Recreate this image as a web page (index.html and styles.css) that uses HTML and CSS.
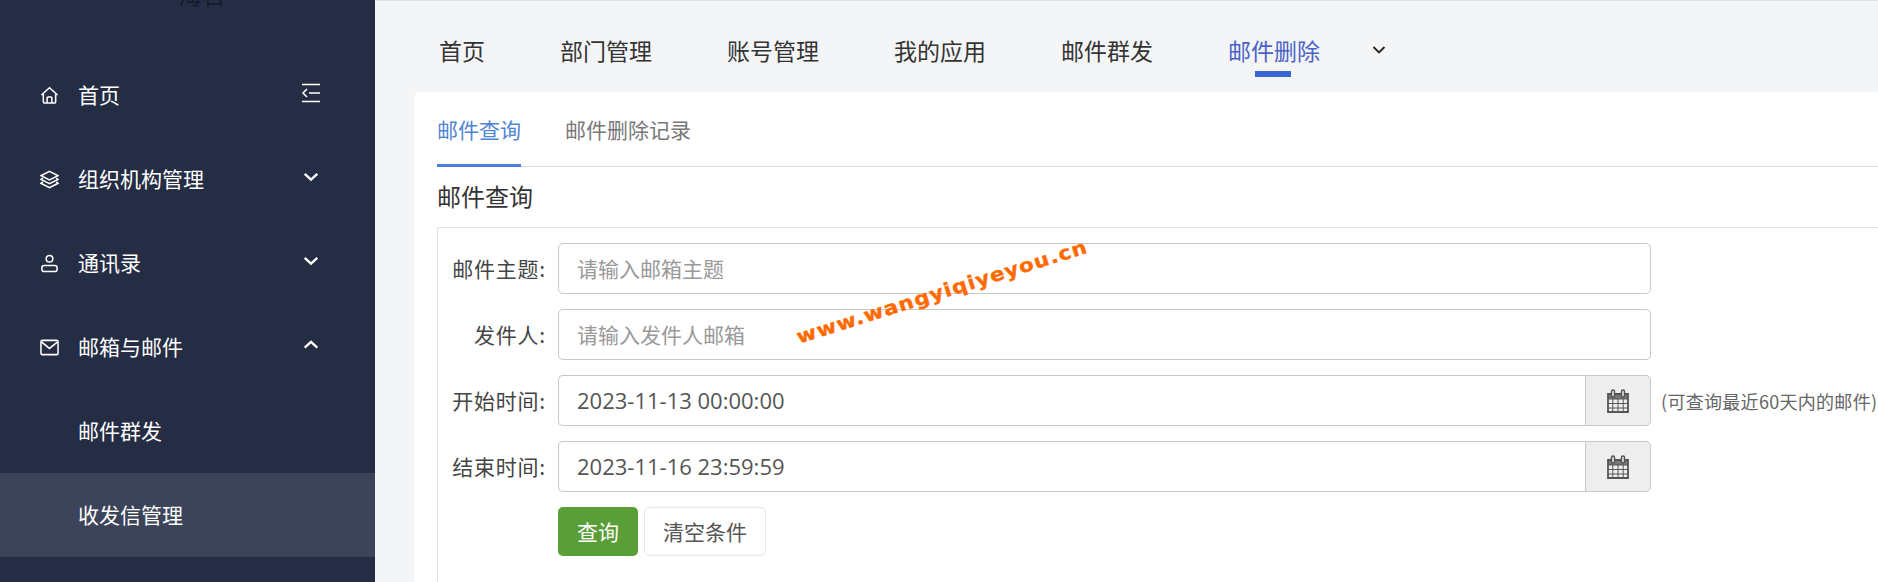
FILE: index.html
```html
<!DOCTYPE html>
<html lang="zh-CN">
<head>
    <meta charset="UTF-8">
    <title>邮件删除</title>
    <link rel="stylesheet" href="styles.css">
</head>
<body>
    <div class="sidebar">
        <div class="logo"><span>海石</span></div>
        <ul class="menu">
            <li class="menu-item">
                <svg class="menu-icon" viewBox="0 0 20 20"><path d="M1.5 9.5 10 1.800l8.500 7.700M3.500 8.200v8.300a1.500 1.500 0 0 0 1.500 1.500h10a1.500 1.500 0 0 0 1.500-1.500V8.200M7.500 18v-5.500a1 1 0 0 1 1-1h3a1 1 0 0 1 1 1V18"/></svg>
                <span class="menu-text">首页</span>
                <svg class="menu-arrow fold" viewBox="0 0 20 20"><path d="M1 1.500h18M1 18.500h18M8 10h11M6 6l-4 4 4 4"/></svg>
            </li>
            <li class="menu-item">
                <svg class="menu-icon" viewBox="0 0 20 20"><path d="M10 1.500 19 6l-9 4.500L1 6zM3 8.500 1 10l9 4.500 9-4.500-2-1.500M3 12.500 1 14l9 4.500 9-4.500-2-1.500"/></svg>
                <span class="menu-text">组织机构管理</span>
                <svg class="menu-arrow" viewBox="0 0 20 20"><path d="M3 6.500 10 13l7-6.500"/></svg>
            </li>
            <li class="menu-item">
                <svg class="menu-icon" viewBox="0 0 20 20"><circle cx="10" cy="5" r="3.500"/><rect x="2" y="12" width="16" height="6.500" rx="2.500"/></svg>
                <span class="menu-text">通讯录</span>
                <svg class="menu-arrow" viewBox="0 0 20 20"><path d="M3 6.500 10 13l7-6.500"/></svg>
            </li>
            <li class="menu-item">
                <svg class="menu-icon" viewBox="0 0 20 20"><rect x="1" y="2.500" width="18" height="15" rx="1.500"/><path d="M1.500 4 10 11l8.500-7"/></svg>
                <span class="menu-text">邮箱与邮件</span>
                <svg class="menu-arrow" viewBox="0 0 20 20"><path d="M3 13 10 6.500l7 6.500"/></svg>
            </li>
            <li class="menu-item sub">
                <span class="menu-text">邮件群发</span>
            </li>
            <li class="menu-item sub active">
                <span class="menu-text">收发信管理</span>
            </li>
        </ul>
    </div>

    <div class="main">
        <div class="top-nav">
            <a class="nav-link">首页</a>
            <a class="nav-link">部门管理</a>
            <a class="nav-link">账号管理</a>
            <a class="nav-link">我的应用</a>
            <a class="nav-link">邮件群发</a>
            <a class="nav-link current">邮件删除</a>
            <svg class="nav-more" viewBox="0 0 14 14"><path d="M1.500 4 7 9.500 12.500 4"/></svg>
        </div>

        <div class="panel">
            <div class="tabs">
                <a class="tab current">邮件查询</a>
                <a class="tab">邮件删除记录</a>
            </div>
            <h2 class="section-title">邮件查询</h2>
            <form class="search-box">
                <label class="field-label">邮件主题:</label>
                <input class="field-input" type="text" placeholder="请输入邮箱主题">
                <span></span>

                <label class="field-label">发件人:</label>
                <input class="field-input" type="text" placeholder="请输入发件人邮箱">
                <span></span>

                <label class="field-label">开始时间:</label>
                <div class="date-group">
                    <input class="field-input" type="text" value="2023-11-13 00:00:00">
                    <span class="date-addon">
                        <svg class="cal-icon" viewBox="0 0 22 24"><path class="cal-head" d="M1 5h20v5H1z"/><path d="M1 5h20v18H1z"/><path class="cal-grid" d="M1 10h20M1 14.500h20M1 19h20M5.800 10v13M11 10v13M16.200 10v13"/><rect class="cal-ring" x="4.500" y="1" width="3" height="7" rx="1.500"/><rect class="cal-ring" x="14.500" y="1" width="3" height="7" rx="1.500"/></svg>
                    </span>
                </div>
                <span class="field-hint">(可查询最近60天内的邮件)</span>

                <label class="field-label">结束时间:</label>
                <div class="date-group">
                    <input class="field-input" type="text" value="2023-11-16 23:59:59">
                    <span class="date-addon">
                        <svg class="cal-icon" viewBox="0 0 22 24"><path class="cal-head" d="M1 5h20v5H1z"/><path d="M1 5h20v18H1z"/><path class="cal-grid" d="M1 10h20M1 14.500h20M1 19h20M5.800 10v13M11 10v13M16.200 10v13"/><rect class="cal-ring" x="4.500" y="1" width="3" height="7" rx="1.500"/><rect class="cal-ring" x="14.500" y="1" width="3" height="7" rx="1.500"/></svg>
                    </span>
                </div>
                <span></span>

                <span></span>
                <div class="form-buttons">
                    <button class="btn btn-search" type="button">查询</button>
                    <button class="btn btn-clear" type="button">清空条件</button>
                </div>
            </form>
        </div>

        <div class="watermark">www.wangyiqiyeyou.cn</div>
    </div>
</body>
</html>
```

FILE: styles.css
```css
html, body {
    margin: 0;
    padding: 0;
    height: 582px;
    overflow: hidden;
}

body {
    display: flex;
    font-family: "Noto Sans CJK SC", "Noto Sans", sans-serif;
    color: #333;
}

/* 左侧菜单 */
.sidebar {
    width: 375px;
    flex-shrink: 0;
    background-color: #252d45;
    color: #fff;
}

.logo {
    height: 53px;
    overflow: hidden;
    text-align: center;
}

.logo span {
    display: block;
    margin-top: -21px;
    padding-left: 28px;
    font-size: 23px;
    line-height: 30px;
    color: #141a2b;
}

.menu {
    list-style: none;
    margin: 0;
    padding: 0;
}

.menu-item {
    display: flex;
    align-items: center;
    height: 84px;
    padding-left: 40px;
    font-size: 21px;
}

.menu-icon {
    width: 19px;
    height: 19px;
    margin-right: 19px;
    fill: none;
    stroke: #fff;
    stroke-width: 1.6;
}

.menu-text {
    flex: 1;
    margin-top: -2px;
}

.menu-arrow {
    width: 18px;
    height: 18px;
    margin-right: 55px;
    margin-top: -4px;
    fill: none;
    stroke: #fff;
    stroke-width: 2.600;
}

.menu-arrow.fold {
    width: 20px;
    height: 20px;
    margin-right: 54px;
    margin-top: -4px;
    stroke-width: 1.600;
}

.menu-item.sub {
    padding-left: 78px;
}

.menu-item.active {
    background-color: #3c445a;
}

/* 右侧内容 */
.main {
    position: relative;
    flex: 1;
    min-width: 0;
    overflow: hidden;
    background-color: #f4f5f7;
    border-top: 1px solid #e2e3e6;
}

.top-nav {
    display: flex;
    align-items: center;
    gap: 75px;
    height: 91px;
    padding-left: 64px;
}

.nav-link {
    position: relative;
    margin-top: 6px;
    font-size: 23px;
    color: #333;
}

.nav-link.current {
    color: #4a63c5;
}

.nav-link.current::after {
    content: "";
    position: absolute;
    left: 27px;
    bottom: -10px;
    width: 36px;
    height: 6px;
    background-color: #3a66d0;
}

.nav-more {
    width: 14px;
    height: 14px;
    margin-top: 6px;
    margin-left: -23px;
    fill: none;
    stroke: #222;
    stroke-width: 1.800;
}

.panel {
    margin-left: 39px;
    height: 500px;
    padding-left: 23px;
    background-color: #fff;
    border-radius: 6px 0 0 0;
}

.tabs {
    display: flex;
    gap: 44px;
    height: 74px;
    border-bottom: 1px solid #ddd;
}

.tab {
    height: 75px;
    box-sizing: border-box;
    line-height: 74px;
    font-size: 21px;
    color: #777;
}

.tab.current {
    color: #4f84d3;
    border-bottom: 3px solid #4a80d4;
}

.section-title {
    margin: 0;
    height: 60px;
    line-height: 57px;
    font-size: 24px;
    font-weight: normal;
    color: #333;
}

.search-box {
    display: grid;
    grid-template-columns: 120px 1093px 1fr;
    grid-auto-rows: 51px;
    gap: 15px 0;
    align-items: center;
    padding: 15px 0 60px;
    border: 1px solid #e4e4e4;
    margin-right: -20px;
}

.field-label {
    padding: 0 12px 2px 0;
    text-align: right;
    font-size: 21px;
    letter-spacing: 0.8px;
    color: #444;
}

.field-input {
    width: 100%;
    height: 51px;
    box-sizing: border-box;
    padding: 0 18px 2px;
    border: 1px solid #c8c8c8;
    border-radius: 5px;
    outline: none;
    font-family: "Open Sans", "Noto Sans CJK SC", sans-serif;
    font-size: 22px;
    color: #555;
}

.field-input::placeholder {
    font-family: "Noto Sans CJK SC", sans-serif;
    font-size: 21px;
    color: #999;
    opacity: 1;
}

.date-group {
    display: flex;
}

.date-group .field-input {
    flex: 1;
    min-width: 0;
    border-radius: 5px 0 0 5px;
    border-right: none;
}

.date-addon {
    display: flex;
    align-items: center;
    justify-content: center;
    width: 66px;
    height: 51px;
    box-sizing: border-box;
    background-color: #eee;
    border: 1px solid #c8c8c8;
    border-radius: 0 5px 5px 0;
}

.cal-icon {
    width: 22px;
    height: 24px;
    fill: none;
    stroke: #555;
    stroke-width: 1.800;
}

.cal-head {
    fill: #777;
    stroke: none;
}

.cal-grid {
    stroke-width: 1;
}

.cal-ring {
    fill: #eee;
    stroke-width: 1.500;
}

.field-hint {
    padding-left: 10px;
    white-space: nowrap;
    font-size: 18px;
    letter-spacing: 0.3px;
    color: #666;
}

.form-buttons {
    display: flex;
    align-self: start;
    gap: 6px;
    height: 49px;
}

.btn {
    height: 49px;
    padding: 0 0 2px;
    border-radius: 5px;
    font-family: inherit;
    font-size: 21px;
    cursor: pointer;
}

.btn-search {
    width: 80px;
    background-color: #5a9e37;
    border: none;
    color: #fff;
}

.btn-clear {
    width: 122px;
    background-color: #fff;
    border: 1px solid #e6e6e6;
    color: #555;
}

/* 图片水印 */
.watermark {
    position: absolute;
    left: 422px;
    top: 325px;
    transform: rotate(-17.500deg) scaleX(1.120);
    transform-origin: left center;
    font-family: "DejaVu Sans", sans-serif;
    font-size: 19px;
    font-weight: bold;
    letter-spacing: 1px;
    white-space: nowrap;
    color: #ff6a00;
    -webkit-text-stroke: 0.4px #ff6a00;
}
```
